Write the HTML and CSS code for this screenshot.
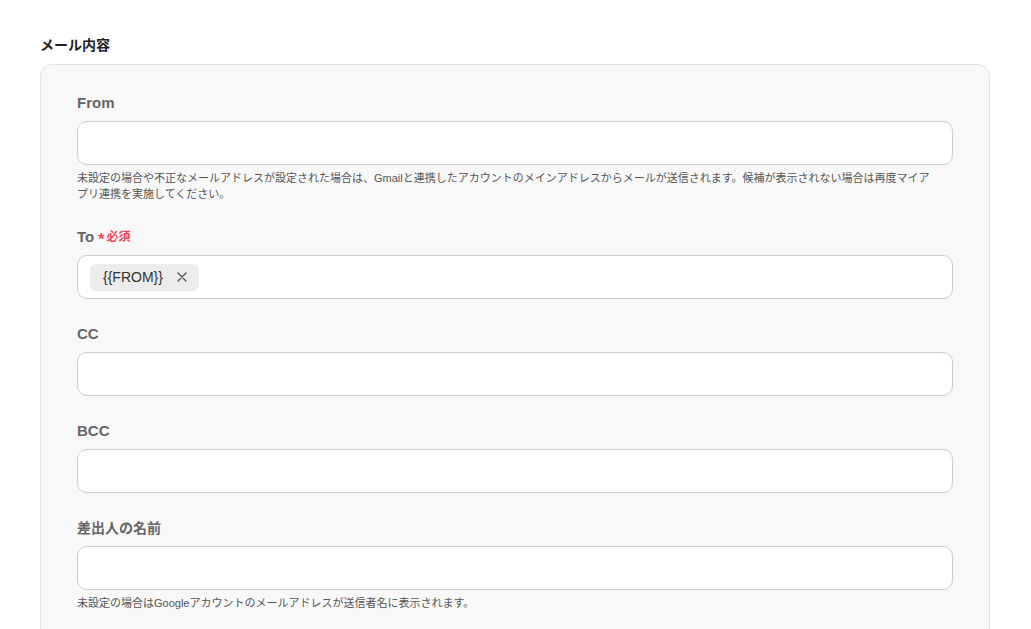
FILE: index.html
```html
<!DOCTYPE html>
<html lang="ja">
<head>
<meta charset="utf-8">
<link rel="stylesheet" href="styles.css">
</head>
<body>
<div class="page">
  <h2 class="section-title">メール内容</h2>
  <div class="card">
    <div class="field">
      <div class="label">From</div>
      <div class="input"></div>
      <p class="help help-wide">未設定の場合や不正なメールアドレスが設定された場合は、Gmailと連携したアカウントのメインアドレスからメールが送信されます。候補が表示されない場合は再度マイアプリ連携を実施してください。</p>
    </div>
    <div class="field">
      <div class="label">To <span class="req"><span class="star">*</span>必須</span></div>
      <div class="input">
        <span class="chip">{{FROM}}
          <svg class="chip-x" width="10" height="10" viewBox="0 0 10 10"><path d="M1 1L9 9M9 1L1 9" stroke="#555" stroke-width="1.4" stroke-linecap="round"/></svg>
        </span>
      </div>
    </div>
    <div class="field">
      <div class="label">CC</div>
      <div class="input"></div>
    </div>
    <div class="field">
      <div class="label">BCC</div>
      <div class="input"></div>
    </div>
    <div class="field">
      <div class="label label-ja">差出人の名前</div>
      <div class="input"></div>
      <p class="help">未設定の場合はGoogleアカウントのメールアドレスが送信者名に表示されます。</p>
    </div>
  </div>
</div>
</body>
</html>
```
FILE: styles.css
```css
* { box-sizing: border-box; }
html, body { margin: 0; padding: 0; background: #fff; }
body {
  font-family: "Liberation Sans", "Noto Sans CJK JP", sans-serif;
  color: #333;
  overflow: hidden;
}
.page { padding: 35px 41px 0 40px; }
.section-title {
  margin: 0 0 9px;
  font-size: 14px;
  line-height: 20px;
  font-weight: 700;
  color: #222;
}
.card {
  background: #f8f8f8;
  border: 1px solid #e2e2e2;
  border-radius: 12px;
  padding: 28px 36px 40px;
  height: 640px;
}
.field { margin-bottom: 25px; }
.label {
  font-size: 15px;
  line-height: 20px;
  font-weight: 700;
  color: #666;
  margin-bottom: 8px;
  display: flex;
  align-items: center;
}
.label-ja { font-size: 14px; }
.req {
  color: #e8475b;
  font-size: 12px;
  font-weight: 700;
  margin-left: 4px;
  display: inline-flex;
  align-items: center;
}
.star { font-size: 16px; line-height: 12px; margin-right: 2px; position: relative; top: 3px; }
.input {
  height: 44px;
  background: #fff;
  border: 1px solid #c8ccd4;
  border-radius: 10px;
  display: flex;
  align-items: center;
  padding: 0 12px;
}
.chip {
  display: inline-flex;
  align-items: center;
  height: 27px;
  padding: 0 12px 0 13px;
  background: #ececec;
  border-radius: 6px;
  font-size: 14px;
  color: #333;
  gap: 14px;
}
.chip-x { display: block; }
.help {
  margin: 5px 0 0;
  font-size: 11px;
  line-height: 16px;
  color: #555;
}
.help-wide { padding-right: 18px; }
```
